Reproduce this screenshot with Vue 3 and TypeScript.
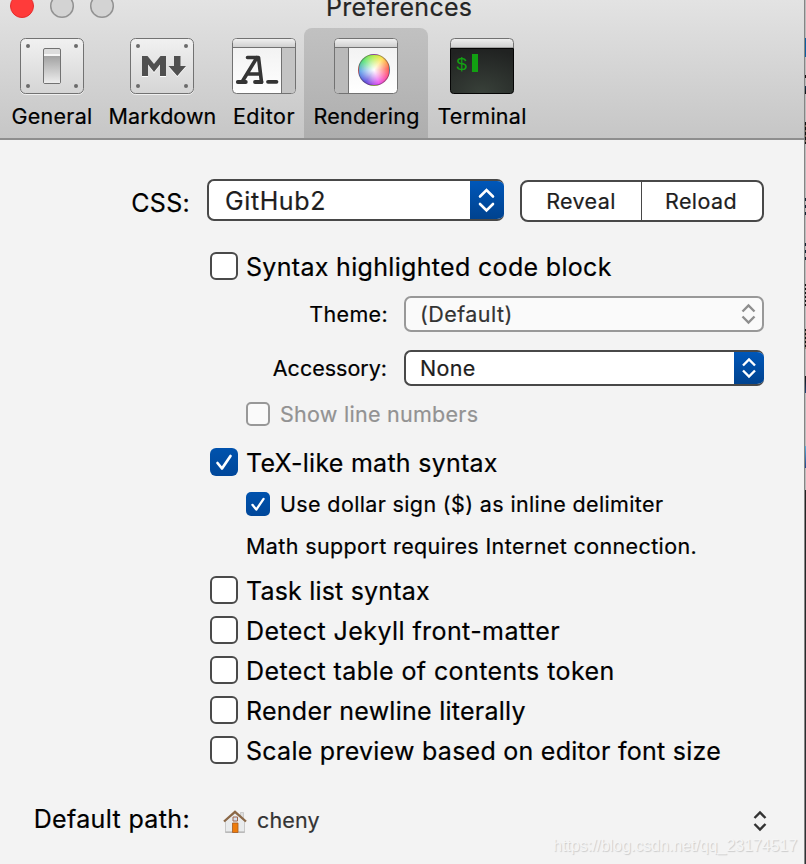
<script setup lang="ts">
import { ref } from 'vue'

interface Option {
  id: string
  label: string
  checked: boolean
}

const tabs = ['General', 'Markdown', 'Editor', 'Rendering', 'Terminal']
const active = ref('Rendering')

const highlight = ref(false)
const lineNumbers = ref(false)
const tex = ref(true)
const dollar = ref(true)

const options = ref<Option[]>([
  { id: 'tasks', label: 'Task list syntax', checked: false },
  { id: 'jekyll', label: 'Detect Jekyll front-matter', checked: false },
  { id: 'toc', label: 'Detect table of contents token', checked: false },
  { id: 'newline', label: 'Render newline literally', checked: false },
  { id: 'scale', label: 'Scale preview based on editor font size', checked: false },
])
</script>

<template>
  <div class="screen">
    <main class="window">
      <header class="toolbar">
        <div class="titlebar">
          <svg class="lights" width="120" height="28" viewBox="0 0 120 28">
            <circle cx="22" cy="6" r="11.5" fill="#ff3b3a" stroke="#e52c2c" />
            <circle cx="62" cy="6" r="11.3" fill="#d3d3d3" stroke="#929292" stroke-width="1.5" />
            <circle cx="102" cy="6" r="11.3" fill="#d3d3d3" stroke="#929292" stroke-width="1.5" />
          </svg>
          <h1 class="title">Preferences</h1>
        </div>
        <nav class="tabs">
          <button
            v-for="tab in tabs"
            :key="tab"
            class="tab"
            :class="[tab.toLowerCase(), { active: tab === active }]"
            @click="active = tab"
          >
            <svg class="tab-icon" width="64" height="57" viewBox="0 0 64 57">
              <defs>
                <linearGradient :id="'plate-' + tab" x1="0" y1="0" x2="0" y2="1">
                  <stop offset="0" stop-color="#f1f1f1" />
                  <stop offset="1" stop-color="#d5d5d5" />
                </linearGradient>
                <linearGradient :id="'bar-' + tab" x1="0" y1="0" x2="0" y2="1">
                  <stop offset="0" stop-color="#f0f0f0" />
                  <stop offset="1" stop-color="#cecece" />
                </linearGradient>
                <linearGradient :id="'page-' + tab" x1="0" y1="0" x2="0" y2="1">
                  <stop offset="0" stop-color="#f0f0f0" />
                  <stop offset="1" stop-color="#ffffff" />
                </linearGradient>
              </defs>
              <template v-if="tab === 'General' || tab === 'Markdown'">
                <rect x=".5" y="1" width="63" height="55.5" rx="5" fill="none" stroke="#f0f0f0" />
                <rect x=".5" y=".5" width="63" height="55" rx="5" :fill="`url(#plate-${tab})`" stroke="#727272" />
                <g fill="#6b6b6b">
                  <circle cx="8" cy="8" r="2" /><circle cx="56" cy="8" r="2" />
                  <circle cx="8" cy="48" r="2" /><circle cx="56" cy="48" r="2" />
                </g>
              </template>
              <template v-if="tab === 'General'">
                <defs>
                  <linearGradient id="lever" x1="0" y1="0" x2="0" y2="1">
                    <stop offset="0" stop-color="#a2a2a2" />
                    <stop offset="1" stop-color="#ededed" />
                  </linearGradient>
                </defs>
                <rect x="23.5" y="10.5" width="17" height="35" rx="1.5" fill="#dcdcdc" stroke="#727272" />
                <rect x="24" y="16" width="16" height="2" fill="#f6f6f6" />
                <rect x="24" y="18" width="16" height="27" fill="url(#lever)" />
              </template>
              <g v-else-if="tab === 'Markdown'">
                <path d="M12 39V19h5.500l6.500 8 6.500-8H36v20h-6V27.500l-6 7.500-6-7.500V39zM44 19h6.500v10H56l-8.700 10L38.500 29H44z" fill="#fff" />
                <path d="M12 38V18h5.500l6.500 8 6.500-8H36v20h-6V26.500L24 34l-6-7.500V38zM44 18h6.500v10H56l-8.700 10L38.500 28H44z" fill="#505050" />
              </g>
              <template v-else-if="tab === 'Editor'">
                <rect x=".5" y=".5" width="63" height="55" rx="4" fill="url(#page-Editor)" stroke="#727272" />
                <path d="M49.500 10H63v41.500a3.500 3.500 0 0 1-3.500 3.500h-10z" fill="#c4c4c4" />
                <path d="M1 9.500V4.500A3.500 3.500 0 0 1 4.500 1h55A3.500 3.500 0 0 1 63 4.500v5z" fill="url(#bar-Editor)" />
                <path d="M.5 9.500h63M49.500 9.500v46" stroke="#727272" />
                <g fill="none" stroke="#353535" stroke-linecap="round" stroke-linejoin="round">
                  <path d="M15.500 19.500h11l3 24.500M25 19.500L10 44M15.500 36h13" stroke-width="3.600" />
                  <path d="M5.800 44h8M23 44h6.500M36 43.800h8.500" stroke-width="3.800" />
                </g>
              </template>
              <template v-else-if="tab === 'Rendering'">
                <rect x=".5" y=".5" width="63" height="55" rx="4" fill="url(#page-Rendering)" stroke="#727272" />
                <path d="M1 10h13.500v45h-10A3.500 3.500 0 0 1 1 51.500z" fill="#bababa" />
                <path d="M1 9.500V4.500A3.500 3.500 0 0 1 4.500 1h55A3.500 3.500 0 0 1 63 4.500v5z" fill="url(#bar-Rendering)" />
                <path d="M.5 9.500h63M14.500 9.500v46" stroke="#727272" />
                <foreignObject x="24" y="16" width="32" height="32"><div class="wheel"></div></foreignObject>
              </template>
              <template v-else>
                <defs>
                  <radialGradient id="crt" cx=".5" cy="1" r="1">
                    <stop offset="0" stop-color="#39413a" />
                    <stop offset="1" stop-color="#202221" />
                  </radialGradient>
                </defs>
                <path d="M.5 10V4.500a4 4 0 0 1 4-4h55a4 4 0 0 1 4 4V10z" fill="url(#bar-Terminal)" stroke="#727272" />
                <path d="M.5 10.500h63v42a3 3 0 0 1-3 3h-57a3 3 0 0 1-3-3z" fill="url(#crt)" stroke="#050505" />
                <text x="6" y="32" class="prompt">$</text>
                <rect x="22" y="16" width="6" height="18" fill="#12a012" />
              </template>
            </svg>
            <span class="tab-label">{{ tab }}</span>
          </button>
        </nav>
      </header>

      <section class="form">
        <div class="row css-row">
          <span class="label big css-label">CSS:</span>
          <div class="select large">
            <span class="value github">GitHub2</span>
            <span class="stepper">
              <svg width="18" height="26" viewBox="0 0 18 26"><path d="M2 9.500L8.500 3 15 9.500M2 17l6.500 6.500L15 17" /></svg>
            </span>
          </div>
          <div class="segmented">
            <button class="segment">Reveal</button>
            <button class="segment">Reload</button>
          </div>
        </div>

        <label class="row check highlight">
          <input v-model="highlight" class="box" type="checkbox" />
          <span class="text s30">Syntax highlighted code block</span>
        </label>

        <div class="row theme">
          <span class="label small s45">Theme:</span>
          <div class="select disabled">
            <span class="value s50">(Default)</span>
            <span class="stepper">
              <svg width="15" height="22" viewBox="0 0 15 22"><path d="M1.500 8.500l6-6 6 6M1.500 13.500l6 6 6-6" /></svg>
            </span>
          </div>
        </div>

        <div class="row accessory">
          <span class="label small accessory-label">Accessory:</span>
          <div class="select">
            <span class="value">None</span>
            <span class="stepper">
              <svg width="15" height="22" viewBox="0 0 15 22"><path d="M1 8.500l6-6 6 6M1 13.500l6 6 6-6" /></svg>
            </span>
          </div>
        </div>

        <label class="row check sub numbers">
          <input v-model="lineNumbers" class="box" type="checkbox" disabled />
          <span class="text">Show line numbers</span>
        </label>

        <label class="row check tex">
          <input v-model="tex" class="box" type="checkbox" />
          <svg v-if="tex" class="tick" width="28" height="28" viewBox="0 0 28 28"><path d="M7.500 15l4.500 5.500L20.500 8" /></svg>
          <span class="text s27">TeX-like math syntax</span>
        </label>

        <label class="row check sub dollar">
          <input v-model="dollar" class="box" type="checkbox" />
          <svg v-if="dollar" class="tick" width="24" height="24" viewBox="0 0 28 28"><path d="M7.500 15l4.500 5.500L20.500 8" /></svg>
          <span class="text s36">Use dollar sign ($) as inline delimiter</span>
        </label>

        <p class="note">Math support requires Internet connection.</p>

        <div class="options">
          <label v-for="option in options" :key="option.id" class="row check">
            <input v-model="option.checked" class="box" type="checkbox" />
            <span class="text" :class="option.id">{{ option.label }}</span>
          </label>
        </div>

        <div class="row path-row">
          <span class="label big path-label">Default path:</span>
          <svg class="house" width="24" height="24" viewBox="0 0 24 24">
            <path d="M17.500 2.500h3v6h-3z" fill="#dedede" stroke="#b5b5b5" stroke-width=".6" />
            <path d="M2.500 11L12 2.500l9.500 8.500v11.500h-19z" fill="#e9ebec" stroke="#b9b9b9" stroke-width=".7" />
            <path d="M2.500 22h19" stroke="#a9a9a9" />
            <path d="M9.500 13h5.500v9.500H9.500z" fill="#ee7c0c" stroke="#a45b22" stroke-width=".8" />
            <path d="M10 7h4.500v4H10z" fill="#d6e2ef" stroke="#a1654b" />
            <path d="M1 11.500L12 1.800l11 9.700" fill="none" stroke="#8b6847" stroke-width="2.300" />
          </svg>
          <span class="folder">cheny</span>
          <svg class="path-stepper" width="14" height="22" viewBox="0 0 14 22"><path d="M1.500 8L7 2.500 12.500 8M1.500 14L7 19.500l5.500-5.500" /></svg>
        </div>
      </section>
    </main>
    <aside class="backdrop"></aside>
    <span class="watermark">https://blog.csdn.net/qq_23174517</span>
  </div>
</template>

<style>
body {
  margin: 0;
  background: #f3f3f3;
}
</style>

<style scoped>
.screen {
  position: relative;
  display: flex;
  width: 806px;
  height: 864px;
  overflow: hidden;
  background: #f3f3f3;
  color: #000;
  font-family: Inter, 'Liberation Sans', sans-serif;
  font-size: 21.5px;
  line-height: 26px;
  white-space: nowrap;
  -webkit-text-stroke: 0.2px currentColor;
}
.screen * {
  box-sizing: border-box;
}
.window {
  width: 804px;
}
button {
  margin: 0;
  padding: 0;
  border: 0;
  background: none;
  color: inherit;
  font: inherit;
}
.toolbar {
  height: 140px;
  border-bottom: 2px solid #8e8e8e;
  background: linear-gradient(#e3e3e3, #c6c6c6);
}
.titlebar {
  display: flex;
  height: 28px;
}
.lights {
  flex: none;
}
.title {
  margin: 0 0 0 206px;
  color: #252525;
  font-size: 25px;
  font-weight: 400;
  line-height: 14px;
  letter-spacing: 0.3px;
}
.tabs {
  display: grid;
  grid-template-columns: 98px 123px 80px 124px 108px;
  height: 110px;
  padding-left: 3px;
}
.tab {
  display: flex;
  flex-direction: column;
  align-items: center;
  padding-top: 10px;
  letter-spacing: 0.25px;
}
.tab.markdown {
  padding-right: 1px;
  letter-spacing: 0.07px;
}
.tab.markdown .tab-label {
  margin-left: 1px;
}
.tab.editor {
  letter-spacing: 0.5px;
}
.tab.rendering .tab-label {
  margin-left: 1px;
}
.tab.active {
  border-radius: 8px 8px 0 0;
  background: linear-gradient(#c1c1c1, #aeaeae);
}
.tab-icon {
  flex: none;
}
.tab-label {
  margin-top: 8px;
}
.wheel {
  width: 32px;
  height: 32px;
  border: 1px solid rgba(80, 60, 70, 0.5);
  border-radius: 50%;
  background:
    radial-gradient(circle, #fff 0%, rgba(255, 255, 255, 0.6) 30%, rgba(255, 255, 255, 0) 72%),
    conic-gradient(#b4ec3c, #ffe04a 35deg, #ff5b4a 85deg, #ff4a94 120deg, #e84cf0 160deg, #5a48dc 215deg, #5aa0e8 265deg, #4ee070 310deg, #b4ec3c);
}
.prompt {
  fill: #12a012;
  font: 19px 'Liberation Mono', monospace;
}

.form {
  padding-top: 39px;
}
.row {
  display: flex;
  align-items: center;
}
.label {
  flex: none;
  text-align: right;
}
.big {
  width: 190px;
  font-size: 25px;
}
.small {
  width: 388px;
}
.css-row {
  align-items: flex-start;
  height: 43px;
}
.css-label {
  padding-top: 11px;
  letter-spacing: 0.3px;
}
.select {
  display: flex;
  flex: none;
  align-items: center;
  width: 360px;
  height: 36px;
  margin-left: 16px;
  overflow: hidden;
  border: 2px solid #484848;
  border-right: 0;
  border-radius: 7px;
  background: #fff;
}
.value {
  flex: 1;
  padding-left: 14px;
  color: #1e1e1e;
  letter-spacing: 0.35px;
}
.stepper {
  display: flex;
  flex: none;
  align-items: center;
  justify-content: center;
  width: 30px;
  height: 36px;
  margin: -2px 0;
  background: linear-gradient(#0058bb, #00418c);
}
.stepper path,
.path-stepper path {
  fill: none;
  stroke: #fff;
  stroke-width: 2.4;
}
.select.large {
  width: 297px;
  height: 42px;
  margin-left: 17px;
}
.large .stepper {
  width: 34px;
  height: 42px;
}
.large path {
  stroke-width: 2.6;
  stroke-linecap: round;
}
.github {
  padding: 1px 0 0 16px;
  font-size: 25px;
  letter-spacing: 0.6px;
}
.select.disabled {
  border-right: 2px solid #989898;
  border-color: #989898;
  background: #fafafa;
}
.disabled .value {
  color: #333;
}
.disabled .stepper {
  width: 28px;
  background: none;
}
.disabled .stepper path {
  stroke: #8e8e8e;
}
.segmented {
  display: grid;
  grid-template-columns: 119px 121px;
  width: 244px;
  height: 42px;
  margin: 1px 0 0 16px;
  border: 2px solid #484848;
  border-radius: 8px;
  background: #fff;
}
.segment {
  padding-right: 1px;
  color: #1e1e1e;
  letter-spacing: 0.4px;
}
.segment + .segment {
  padding-right: 2px;
  border-left: 1px solid #484848;
}

.check {
  position: relative;
  height: 28px;
  padding-left: 210px;
  font-size: 25px;
}
.box {
  appearance: none;
  flex: none;
  width: 28px;
  height: 28px;
  margin: 0;
  border: 2px solid #4a4a4a;
  border-radius: 6px;
  background: #fff;
}
.box:checked {
  border: 0;
  background: linear-gradient(#0052ad, #00479a);
}
.text {
  padding: 2px 0 0 8px;
}
.tick {
  flex: none;
  margin-left: -28px;
}
.tick path {
  fill: none;
  stroke: #fff;
  stroke-width: 2.7;
  stroke-linecap: round;
  stroke-linejoin: round;
}
.sub {
  height: 24px;
  padding-left: 246px;
  font-size: 21.5px;
}
.sub .box {
  width: 24px;
  height: 24px;
  border-radius: 5px;
}
.sub .tick {
  margin-left: -24px;
}
.sub .text {
  padding: 0 0 0 10px;
}
.box:disabled {
  border-color: #989898;
  background: #fafafa;
}
.highlight {
  margin-top: 30px;
}
.theme {
  margin-top: 16px;
}
.accessory {
  margin-top: 18px;
}
.accessory-label {
  padding-right: 1px;
}
.numbers {
  margin-top: 16px;
  color: #929292;
  letter-spacing: 0.27px;
}
.tex {
  margin-top: 22px;
}
.dollar {
  margin-top: 16px;
}
.note {
  margin: 18px 0 0;
  padding-left: 246px;
  line-height: 24px;
  letter-spacing: 0.38px;
}
.options {
  display: grid;
  gap: 12px;
  margin-top: 18px;
}
.s27,
.scale,
.newline {
  letter-spacing: 0.26px;
}
.s30 {
  letter-spacing: 0.32px;
}
.s36 {
  letter-spacing: 0.36px;
}
.s45 {
  letter-spacing: 0.35px;
}
.s50 {
  letter-spacing: 0.45px;
}
.tasks {
  letter-spacing: 0.19px;
}
.jekyll,
.toc {
  letter-spacing: 0.42px;
}
.path-label {
  letter-spacing: 0.36px;
}
.path-row {
  height: 32px;
  margin-top: 40px;
}
.path-label {
  padding-bottom: 2px;
}
.house {
  flex: none;
  margin: 4px 10px 0 33px;
}
.folder {
  color: #333;
  letter-spacing: 0.15px;
}
.path-stepper {
  margin: 2px 37px 0 auto;
}
.path-stepper path {
  stroke: #333;
}
.backdrop {
  width: 2px;
  border-left: 1px solid #858585;
  background:
    linear-gradient(#111, #111) 0 75px / 1px 3px no-repeat,
    linear-gradient(#123450, #111) 0 86px / 1px 8px no-repeat,
    linear-gradient(#0d5fa0, #0d5fa0) 0 38px / 1px 19px no-repeat,
    repeating-linear-gradient(#111 0 3px, #765 3px 5px) 0 122px / 1px 22px no-repeat,
    repeating-linear-gradient(#123 0 3px, #bbb 3px 7px) 0 198px / 1px 18px no-repeat,
    repeating-linear-gradient(#123 0 3px, #bbb 3px 7px) 0 243px / 1px 18px no-repeat,
    repeating-linear-gradient(#111 0 2px, #bbb 2px 4px) 0 284px / 1px 24px no-repeat,
    repeating-linear-gradient(#111 0 2px, #987 2px 4px) 0 329px / 1px 20px no-repeat,
    linear-gradient(#111, #247) 0 376px / 1px 17px no-repeat,
    linear-gradient(#5ab0dc, #248) 0 446px / 1px 22px no-repeat,
    linear-gradient(#222, #303236) 0 490px / 1px 374px no-repeat,
    #bcbcbc;
}
.watermark {
  position: absolute;
  right: 9px;
  bottom: 9px;
  color: #f5f5f5;
  font: 16px/19px 'Liberation Sans', sans-serif;
  letter-spacing: -0.05px;
  text-shadow: 1px 1px 1px rgba(0, 0, 0, 0.16);
  -webkit-text-stroke: 0;
}
</style>
